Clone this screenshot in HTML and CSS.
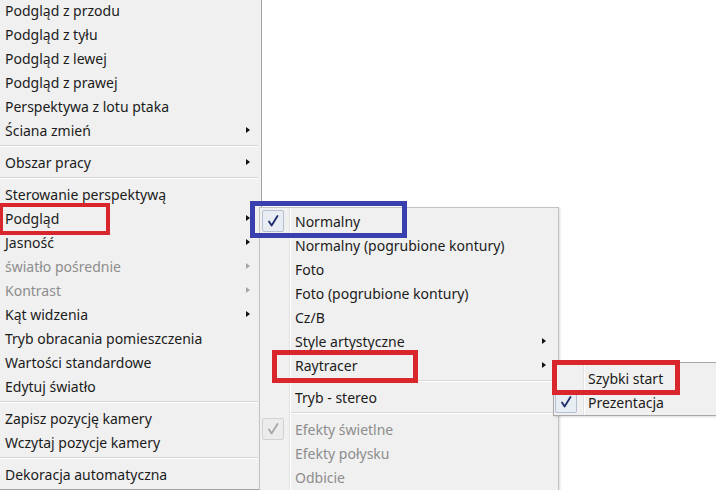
FILE: index.html
```html
<!DOCTYPE html>
<html lang="pl">
<head>
    <meta charset="UTF-8">
    <title>Menu widoku</title>
    <link rel="stylesheet" href="styles.css">
</head>
<body>
    <div class="screen">
        <ul class="menu main">
            <li class="item">Podgląd z przodu</li>
            <li class="item">Podgląd z tyłu</li>
            <li class="item">Podgląd z lewej</li>
            <li class="item">Podgląd z prawej</li>
            <li class="item">Perspektywa z lotu ptaka</li>
            <li class="item has-sub">Ściana zmień</li>
            <li class="sep"></li>
            <li class="item has-sub">Obszar pracy</li>
            <li class="sep"></li>
            <li class="item">Sterowanie perspektywą</li>
            <li class="item has-sub">Podgląd</li>
            <li class="item has-sub">Jasność</li>
            <li class="item has-sub disabled">światło pośrednie</li>
            <li class="item has-sub disabled">Kontrast</li>
            <li class="item has-sub">Kąt widzenia</li>
            <li class="item">Tryb obracania pomieszczenia</li>
            <li class="item">Wartości standardowe</li>
            <li class="item">Edytuj światło</li>
            <li class="sep"></li>
            <li class="item">Zapisz pozycję kamery</li>
            <li class="item">Wczytaj pozycje kamery</li>
            <li class="sep"></li>
            <li class="item">Dekoracja automatyczna</li>
        </ul>

        <!-- podmenu Podgląd -->
        <ul class="menu sub sub-view">
            <li class="item"><span class="gutter"><span class="box"><svg viewBox="0 0 20 20"><path d="M6 10.5 L8.6 14.5 L14.5 5"/></svg></span></span><span class="label">Normalny</span></li>
            <li class="item"><span class="gutter"></span><span class="label">Normalny (pogrubione kontury)</span></li>
            <li class="item"><span class="gutter"></span><span class="label">Foto</span></li>
            <li class="item"><span class="gutter"></span><span class="label">Foto (pogrubione kontury)</span></li>
            <li class="item"><span class="gutter"></span><span class="label">Cz/B</span></li>
            <li class="item has-sub"><span class="gutter"></span><span class="label">Style artystyczne</span></li>
            <li class="item has-sub"><span class="gutter"></span><span class="label">Raytracer</span></li>
            <li class="sep"></li>
            <li class="item"><span class="gutter"></span><span class="label">Tryb - stereo</span></li>
            <li class="sep"></li>
            <li class="item disabled"><span class="gutter"><span class="box"><svg viewBox="0 0 20 20"><path d="M6 10.5 L8.6 14.5 L14.5 5"/></svg></span></span><span class="label">Efekty świetlne</span></li>
            <li class="item disabled"><span class="gutter"></span><span class="label">Efekty połysku</span></li>
            <li class="item disabled"><span class="gutter"></span><span class="label">Odbicie</span></li>
        </ul>

        <!-- podmenu Raytracer -->
        <ul class="menu sub sub-ray">
            <li class="item"><span class="gutter"></span><span class="label">Szybki start</span></li>
            <li class="item"><span class="gutter"><span class="box"><svg viewBox="0 0 20 20"><path d="M6 10.5 L8.6 14.5 L14.5 5"/></svg></span></span><span class="label">Prezentacja</span></li>
        </ul>

        <div class="mark red mark-podglad"></div>
        <div class="mark blue mark-normalny"></div>
        <div class="mark red mark-raytracer"></div>
        <div class="mark red mark-szybki"></div>
    </div>
</body>
</html>
```

FILE: styles.css
```css
body {
    margin: 0;
    background: #fff;
    overflow: hidden;
}
.screen {
    position: relative;
    width: 716px;
    height: 490px;
    overflow: hidden;
}
.menu {
    list-style: none;
    margin: 0;
    padding: 0;
    background: #f0f0f0;
    font-family: "Noto Sans", sans-serif;
    font-size: 14px;
    color: #1b1b1b;
    box-sizing: border-box;
}
.menu .item {
    height: 24px;
    display: flex;
    align-items: center;
    white-space: nowrap;
}
.menu .item.disabled {
    color: #8d8d8d;
}
.menu .has-sub::after {
    content: "";
    margin-left: auto;
    width: 0;
    height: 0;
    border-top: 3.5px solid transparent;
    border-bottom: 3.5px solid transparent;
    border-left: 4px solid #111;
}
.menu .has-sub.disabled::after {
    border-left-color: #a5a5a5;
}
.menu .sep {
    height: 8px;
    display: flex;
    flex-direction: column;
    justify-content: center;
}
.menu .sep::before {
    content: "";
    height: 1px;
    background: #d7d7d7;
    border-bottom: 1px solid #fff;
}

/* glowne menu */
.main {
    width: 262px;
    height: 492px;
    margin-top: -2px;
    border-right: 1px solid #a3a3a3;
    border-bottom: 1px solid #a3a3a3;
}
.main .item {
    padding-left: 5px;
}
.main .has-sub::after {
    margin-right: 11px;
}
.main .sep {
    margin-right: 3px;
}

/* podmenu */
.sub {
    position: absolute;
    border: 1px solid #c3c3c3;
    padding: 1px 0;
    background: linear-gradient(to right, #f0f0f0 0 29px, #e2e3e3 29px 30px, #fff 30px 31px, #f0f0f0 31px);
    box-shadow: 1px 1px 2px rgba(0, 0, 0, 0.15);
}
.sub .gutter {
    width: 31px;
    height: 24px;
    display: flex;
    align-items: center;
    padding-left: 2px;
    box-sizing: border-box;
}
.sub .label {
    padding-left: 4px;
}
.sub .has-sub::after {
    margin-right: 12px;
}
.sub .sep {
    margin-left: 31px;
    margin-right: 3px;
}
.box {
    width: 22px;
    height: 22px;
    box-sizing: border-box;
    border: 1px solid #b4bfd2;
    border-radius: 2px;
    background: #e8edf4;
    display: flex;
    align-items: center;
    justify-content: center;
}
.box svg {
    width: 20px;
    height: 20px;
    fill: none;
    stroke: #1e2a6a;
    stroke-width: 1.8;
    stroke-linecap: round;
    stroke-linejoin: round;
}
.disabled .box {
    border-color: #d2d2d2;
    background: #ececec;
}
.disabled .box svg {
    stroke: #a6a6a6;
}
.sub-view {
    left: 259px;
    top: 207px;
    width: 300px;
    height: 300px;
}
.sub-ray {
    left: 553px;
    top: 362px;
    width: 180px;
    padding: 3px 0 1px;
    border-color: #a8a8a8;
}
.sub-ray .gutter {
    padding-left: 1px;
}
.sub-ray .label {
    padding-left: 3px;
}

/* zaznaczenia na zrzucie */
.mark {
    position: absolute;
    box-sizing: border-box;
    border: 5px solid #d9262c;
}
.mark.blue {
    border-color: #3a3fae;
}
.mark-podglad {
    left: -1px;
    top: 203px;
    width: 111px;
    height: 32px;
    border-width: 4px;
}
.mark-normalny {
    left: 250px;
    top: 201px;
    width: 157px;
    height: 37px;
}
.mark-raytracer {
    left: 272px;
    top: 350px;
    width: 146px;
    height: 33px;
}
.mark-szybki {
    left: 552px;
    top: 360px;
    width: 128px;
    height: 35px;
}
```
